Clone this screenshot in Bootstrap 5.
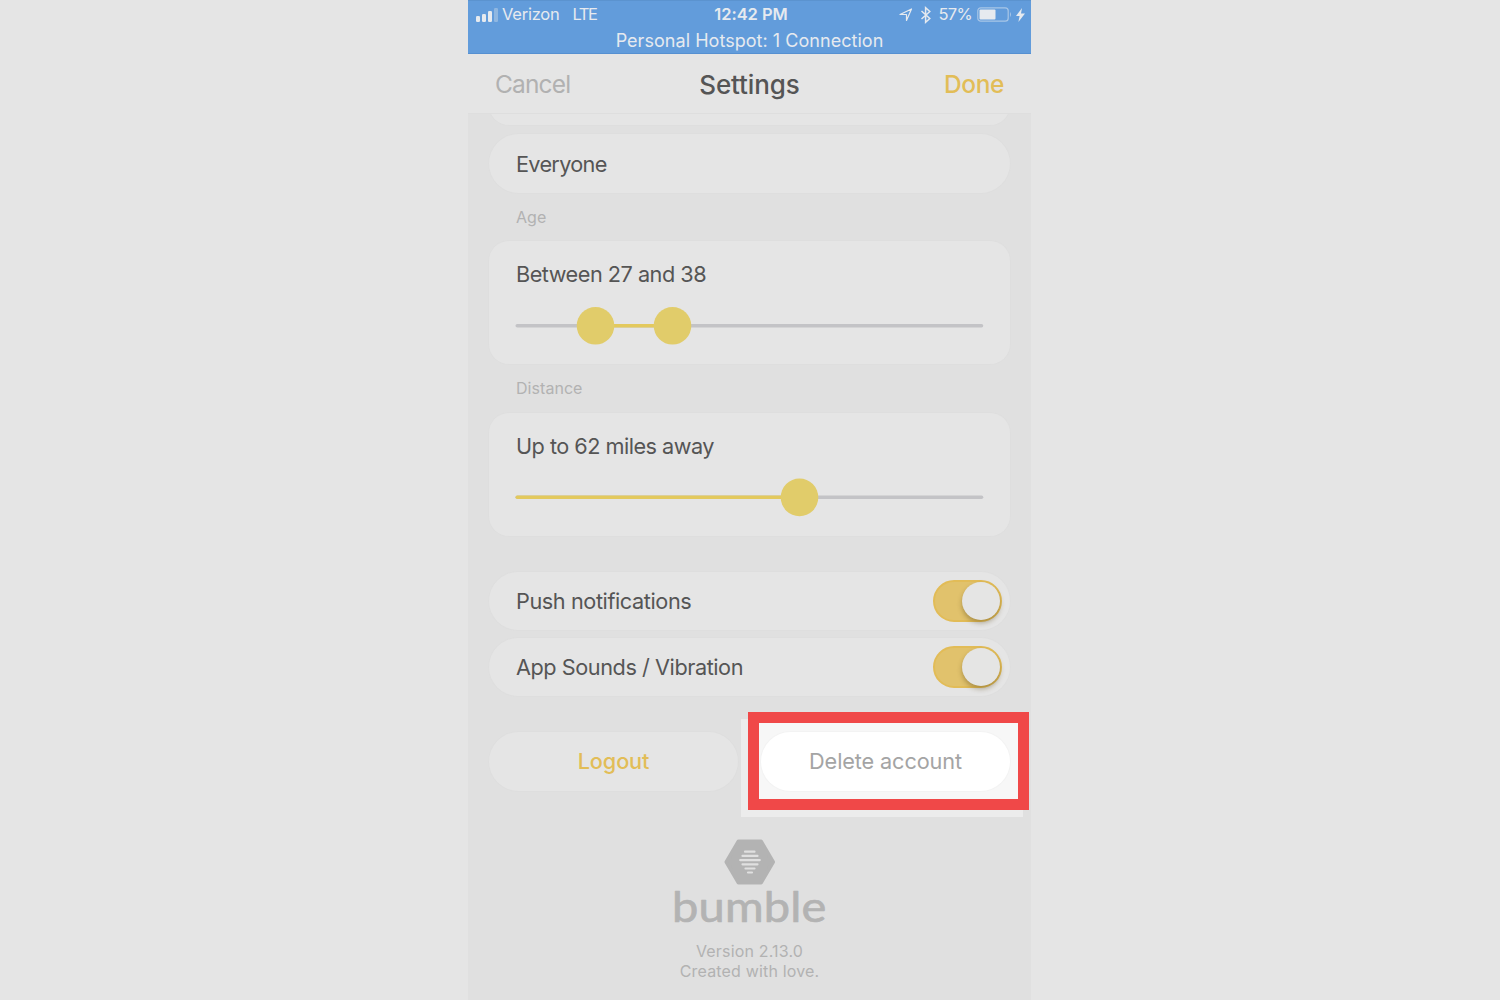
<!DOCTYPE html>
<html lang="en">
<head>
<meta charset="utf-8">
<meta name="viewport" content="width=device-width, initial-scale=1">
<title>Settings</title>
<link href="https://cdn.jsdelivr.net/npm/bootstrap@5.3.0/dist/css/bootstrap.min.css" rel="stylesheet">
<style>
body{background:#e5e5e5;font-family:Inter,"Liberation Sans",sans-serif;color:#555;height:1000px;overflow:hidden}
.phone{width:563px;height:1000px;margin-left:468px;background:#e0e0e0;overflow:hidden}
.status{height:54px;background:#629cdb;color:#e6eaef;border-top:1px solid #5b93cf;border-bottom:1px solid #5690d1;font-size:16.5px}
.status-row{height:27px;line-height:27px}
.hotspot{height:25px;line-height:25px;font-size:18px;letter-spacing:.04px}
.side{width:33.333%}
.titlebar{height:60px;background:#e5e5e5;border-bottom:1px solid #dedede;padding:1px 27px 0;font-size:24.5px}
.titlebar h1{font-size:26px;font-weight:500;color:#555;letter-spacing:-.1px;padding-top:1px}
.cancel{color:#b1b1b1;letter-spacing:-.85px}
.gold{color:#e2bd57;font-weight:450}
.t-done{letter-spacing:-.4px}
.content{padding:0 21px}
.panel{background:#e5e5e5;box-shadow:0 0 0 1px #dedede;font-size:21.7px;letter-spacing:-.5px;padding:0 27px;line-height:30px}
.pill{border-radius:30px;height:59px}
.pill.t-ev{margin-top:8px;letter-spacing:-.7px}
.peek{height:40px;margin-top:-29px;border-radius:30px}
.list-clip{height:12px;overflow:hidden;padding:0 1px;margin:0 -1px}
.slab{height:123px;border-radius:20px;padding-top:18px}
.lbl{font-size:16px;color:#b2b2b2;height:48px;line-height:48px;padding-left:27px;letter-spacing:.05px}
.slider{display:block;margin-top:18px;margin-left:-1px;overflow:visible}
.slab-dist{margin-top:1px}
.toggle{width:69px;height:42px;border-radius:21px;background:#e1c26c;border:2px solid #e2bc57;padding:0;margin-right:-19px}
.knob{width:38px;height:38px;border-radius:50%;background:#e5e5e4;box-shadow:0 3px 5px rgba(90,70,20,.4)}
.row-push{margin-top:36px;height:58px}
.row-app{margin-top:8px;height:58px;padding-bottom:1px!important}
.actions{margin-top:36px}
.halfpill{width:249px;justify-content:center}
.halo{width:282px;height:98px;background:#ececec;top:-13px;left:-20px}
.frame{width:281px;height:98px;border:11px solid #f04848;background:#f7f7f7;top:-20px;left:-13px}
.del{background:#fff;color:#a4a4a4;box-shadow:0 0 0 1px #f3f3f3;letter-spacing:-.12px;padding-bottom:1px}
.t-log{letter-spacing:-.1px;padding-bottom:1px}
.t-dist{letter-spacing:-.53px}
.t-push{letter-spacing:-.42px}
.t-app{letter-spacing:-.45px}
.about{font-size:16px;line-height:19.5px;color:#b2b2b2;letter-spacing:.17px;margin-top:47px}
.about svg{overflow:visible}
.vers{margin-top:16px}
.t-ver{letter-spacing:-.25px}
.t-lte{margin-left:13px;letter-spacing:-1.4px}
.t-time{letter-spacing:-.05px;padding-left:3px}
.t-right{padding-right:6px}
.bt{margin:0 6px 0 7px}
.t-pct{margin-right:5px;letter-spacing:-.7px}
.bolt{margin-left:4px}
</style>
</head>
<body>
<main class="phone">
  <header class="status">
    <div class="status-row d-flex">
      <div class="side d-flex align-items-center ps-2">
        <svg width="22" height="14" fill="#e6eaef"><rect y="8" width="4" height="6" rx="1.3"/><rect x="6" y="6" width="4" height="8" rx="1.3"/><rect x="12" y="3" width="4" height="11" rx="1.3"/><rect x="18" y="0" width="4" height="14" rx="1.3" opacity=".35"/></svg>
        <span class="t-ver ms-1">Verizon</span><span class="t-lte">LTE</span>
      </div>
      <div class="side text-center fw-semibold t-time">12:42 PM</div>
      <div class="side d-flex align-items-center justify-content-end t-right">
        <svg width="14" height="14" viewBox="0 0 14 14" fill="none" stroke="#e6eaef" stroke-width="1.2" stroke-linejoin="round"><path d="M1 6.5 12.5 1 7.5 12.5V6.5Z"/></svg>
        <svg class="bt" width="12" height="18" viewBox="0 0 12 18" fill="none" stroke="#e6eaef" stroke-width="1.5"><path d="m1.500 5 8.300 7.500-4.200 3.800V1.700l4.200 3.800L1.500 13"/></svg>
        <span class="t-pct">57%</span>
        <svg width="35" height="15" fill="none"><rect x=".8" y=".8" width="30.4" height="13.4" rx="3" stroke="#a8c6e7" stroke-width="1.2"/><rect x="2.5" y="2.5" width="16" height="10" rx="1" fill="#e6eaef"/><path d="M33 5q2 2.5 0 5Z" fill="#a8c6e7"/></svg>
        <svg class="bolt" width="9" height="14" viewBox="0 0 9 14" fill="#e6eaef"><path d="M6 0 0 8h3.6L2.4 14 9 5.6H5Z"/></svg>
      </div>
    </div>
    <div class="hotspot text-center">Personal Hotspot: 1 Connection</div>
  </header>
  <nav class="titlebar d-flex align-items-center">
    <span class="cancel side">Cancel</span><h1 class="m-0 side text-center">Settings</h1><span class="gold t-done side text-end">Done</span>
  </nav>
  <div class="content">
    <div class="list-clip"><div class="panel peek"></div></div>
    <div class="panel pill d-flex align-items-center t-ev">Everyone</div>
    <div class="lbl">Age</div>
    <section class="panel slab"><div class="t-age">Between 27 and 38</div>
      <svg class="slider" width="469" height="38"><path d="M2.3 18.7H466.5" stroke="#c3c3c6" stroke-width="3.6" stroke-linecap="round"/><path d="M81 18.7H158" stroke="#e3c95d" stroke-width="3.6"/><circle cx="80.5" cy="18.8" r="18.8" fill="#e1cc6a"/><circle cx="157.5" cy="18.8" r="18.8" fill="#e1cc6a"/></svg>
    </section>
    <div class="lbl">Distance</div>
    <section class="panel slab slab-dist"><div class="t-dist">Up to 62 miles away</div>
      <svg class="slider" width="469" height="38"><path d="M2.3 18.2H466.5" stroke="#c3c3c6" stroke-width="3.6" stroke-linecap="round"/><path d="M2.3 18.2H284" stroke="#e3c95d" stroke-width="3.6" stroke-linecap="round"/><circle cx="284.5" cy="18.4" r="18.8" fill="#e1cc6a"/></svg>
    </section>
    <div class="panel pill row-push d-flex align-items-center justify-content-between"><span class="t-push">Push notifications</span><span class="toggle d-flex align-items-center justify-content-end"><span class="knob"></span></span></div>
    <div class="panel pill row-app d-flex align-items-center justify-content-between"><span class="t-app">App Sounds / Vibration</span><span class="toggle d-flex align-items-center justify-content-end"><span class="knob"></span></span></div>
    <div class="d-flex justify-content-between actions">
      <div class="panel pill halfpill d-flex align-items-center gold t-log">Logout</div>
      <div class="position-relative">
        <div class="halo position-absolute"></div><div class="frame position-absolute"></div>
        <div class="panel pill halfpill del d-flex align-items-center position-relative">Delete account</div>
      </div>
    </div>
    <footer class="about text-center">
      <svg class="d-block mx-auto" width="156" height="88" viewBox="0 0 156 88"><path d="M67 3.500H89.500L101.500 24 89.500 44.500H67L55 24Z" transform="translate(-.5)" fill="#b3b3b3" stroke="#b3b3b3" stroke-width="4" stroke-linejoin="round"/><path d="M73 13.700H82.500M70.500 17.900H85.500M68.200 22.100H87.800M70.500 26.300H85.500M73.500 30.500H82.500M76 34.500H80" stroke="#e0e0e0" stroke-width="2.2" stroke-linecap="round"/><text x="0" y="83.500" font-family="Lato" font-size="43" textLength="154.500" lengthAdjust="spacingAndGlyphs" fill="#b3b3b3" stroke="#b3b3b3" stroke-width=".7" stroke-linejoin="round">bumble</text></svg>
      <div class="vers">Version 2.13.0<br>Created with love.</div>
    </footer>
  </div>
</main>
<script src="https://cdn.jsdelivr.net/npm/bootstrap@5.3.0/dist/js/bootstrap.bundle.min.js"></script>
</body>
</html>
